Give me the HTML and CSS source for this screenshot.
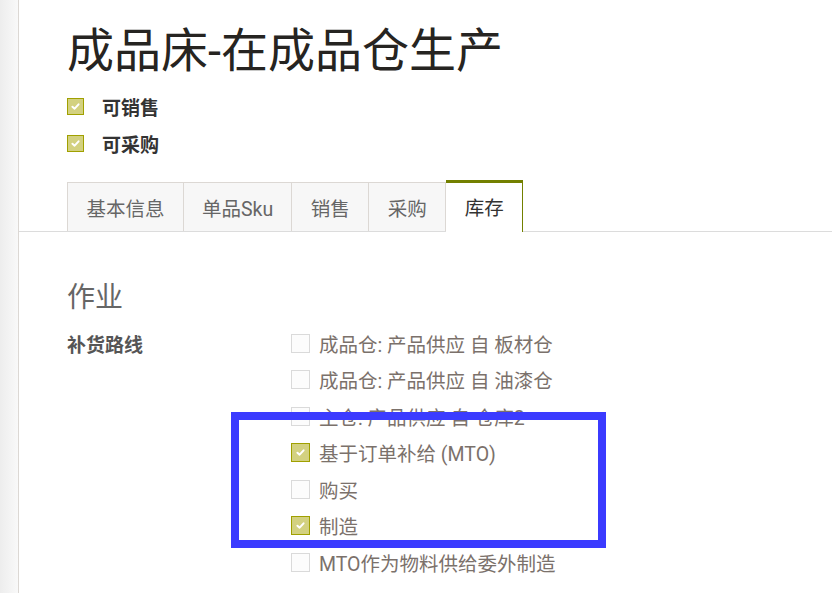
FILE: index.html
```html
<!DOCTYPE html>
<html lang="zh">
<head>
<meta charset="utf-8">
<link rel="stylesheet" href="styles.css">
</head>
<body>
<div class="sidebar"></div>
<div class="main">
  <div class="header">
    <h1 class="title">成品床-在成品仓生产</h1>
    <div class="flag-row">
      <span class="cb cb-sm checked"><svg viewBox="0 0 10 10"><polyline points="2.2,5.2 4.2,7 7.8,3"/></svg></span>
      <span class="flag-label">可销售</span>
    </div>
    <div class="flag-row">
      <span class="cb cb-sm checked"><svg viewBox="0 0 10 10"><polyline points="2.2,5.2 4.2,7 7.8,3"/></svg></span>
      <span class="flag-label">可采购</span>
    </div>
  </div>
  <div class="tabs">
    <div class="tab">基本信息</div>
    <div class="tab tab-sku">单品Sku</div>
    <div class="tab">销售</div>
    <div class="tab tab-last">采购</div>
    <div class="tab tab-active">库存</div>
  </div>
  <div class="content">
    <h2 class="section-title">作业</h2>
    <div class="field">
      <div class="field-label">补货路线</div>
      <div class="routes">
        <div class="route"><span class="cb"></span><span class="route-label">成品仓: 产品供应 自 板材仓</span></div>
        <div class="route"><span class="cb"></span><span class="route-label">成品仓: 产品供应 自 油漆仓</span></div>
        <div class="route"><span class="cb"></span><span class="route-label">主仓: 产品供应 自 仓库2</span></div>
        <div class="route"><span class="cb checked"><svg viewBox="0 0 10 10"><polyline points="2.2,5.2 4.2,7 7.8,3"/></svg></span><span class="route-label">基于订单补给 (MTO)</span></div>
        <div class="route"><span class="cb"></span><span class="route-label">购买</span></div>
        <div class="route"><span class="cb checked"><svg viewBox="0 0 10 10"><polyline points="2.2,5.2 4.2,7 7.8,3"/></svg></span><span class="route-label">制造</span></div>
        <div class="route"><span class="cb"></span><span class="route-label">MTO作为物料供给委外制造</span></div>
      </div>
    </div>
  </div>
  <div class="highlight"></div>
</div>
</body>
</html>
```

FILE: styles.css
```css
html, body {
  margin: 0;
  padding: 0;
  background: #ffffff;
}
body {
  display: flex;
  min-height: 593px;
  font-family: "Roboto", "Noto Sans CJK SC", sans-serif;
  overflow: hidden;
}
.sidebar {
  width: 18px;
  flex: none;
  background: linear-gradient(to right, #ededed, #f9f9f9);
  border-right: 1px solid #dcd8d4;
}
.main {
  flex: 1;
  position: relative;
}
.header {
  padding: 23px 0 0 48px;
}
.title {
  margin: 0;
  font-size: 47px;
  line-height: 56px;
  font-weight: 400;
  color: #262421;
}
.flag-row {
  display: flex;
  align-items: center;
  height: 37px;
}
.flag-row:first-of-type {
  margin-top: 9px;
}
.flag-label {
  margin-left: 18px;
  font-size: 19px;
  font-weight: 700;
  color: #333;
}
.cb {
  box-sizing: border-box;
  width: 19px;
  height: 19px;
  border: 1px solid #dadada;
  background: #fcfcfc;
  display: inline-flex;
  align-items: center;
  justify-content: center;
  flex: none;
}
.cb-sm {
  width: 17px;
  height: 17px;
}
.cb.checked {
  border-color: #a0a000;
  background: #d3d180;
}
.cb svg {
  width: 11px;
  height: 11px;
}
.cb polyline {
  fill: none;
  stroke: #ffffff;
  stroke-width: 1.8;
  stroke-linecap: round;
  stroke-linejoin: round;
}
.tabs {
  display: flex;
  align-items: flex-end;
  margin-top: 19px;
  padding-left: 48px;
  border-bottom: 1px solid #dcdcdc;
  height: 50px;
}
.tab {
  box-sizing: border-box;
  height: 49px;
  padding: 0 18.5px;
  border-top: 1px solid #dcd8d4;
  border-left: 1px solid #dcd8d4;
  background: #f7f7f7;
  color: #666;
  font-size: 19.5px;
  display: flex;
  align-items: center;
  white-space: nowrap;
}
.tab-sku {
  padding: 0 18px;
}
.tab-last {
  border-right: 1px solid #dcd8d4;
}
.tab-active {
  height: 52px;
  margin-bottom: -1px;
  border-top: 3px solid #738000;
  border-right: 1px solid #738000;
  border-left: none;
  background: #ffffff;
  color: #333;
  padding-bottom: 2px;
}
.content {
  padding: 48px 0 0 48px;
}
.section-title {
  margin: 0;
  font-size: 28px;
  line-height: 36px;
  font-weight: 400;
  color: #666;
}
.field {
  display: flex;
  margin-top: 9px;
}
.field-label {
  width: 224px;
  flex: none;
  height: 36.5px;
  display: flex;
  align-items: center;
  font-size: 19px;
  font-weight: 700;
  color: #555;
}
.routes {
  display: flex;
  flex-direction: column;
}
.route {
  height: 36.5px;
  display: flex;
  align-items: center;
}
.route-label {
  margin-left: 9px;
  font-size: 19.5px;
  color: #7b716b;
  white-space: nowrap;
}
.highlight {
  position: absolute;
  left: 212px;
  top: 412px;
  width: 375px;
  height: 136px;
  box-sizing: border-box;
  border: 8px solid #3b3bff;
  pointer-events: none;
}
```
